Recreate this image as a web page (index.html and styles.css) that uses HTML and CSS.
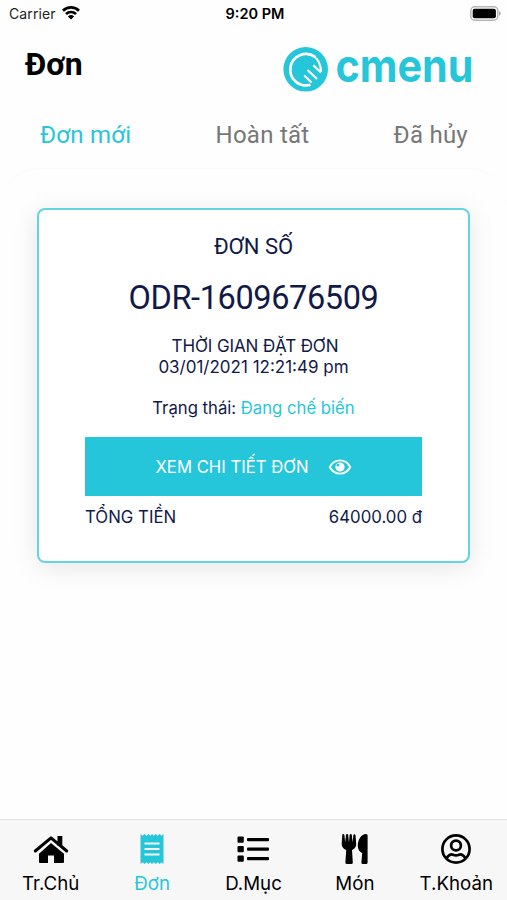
FILE: index.html
```html
<!DOCTYPE html>
<html lang="vi">
<head>
    <meta charset="UTF-8">
    <meta name="viewport" content="width=device-width, initial-scale=1.0">
    <title>Đơn - cmenu</title>
    <link rel="stylesheet" href="styles.css">
</head>
<body>
    <div class="app">
        <div class="status-bar">
            <div class="status-carrier">
                <span>Carrier</span>
                <svg class="wifi-icon" viewBox="0 0 18 14" width="18" height="14" fill="none" stroke="#000" stroke-width="2.7">
                    <path d="M1 4.7a11.5 11.5 0 0 1 16 0"/>
                    <path d="M4 8a7.2 7.2 0 0 1 10 0"/>
                    <path d="M9 13.6L5.9 10.5a4.5 4.5 0 0 1 6.2 0z" fill="#000" stroke="none"/>
                </svg>
            </div>
            <div class="status-time">9:20 PM</div>
            <div class="status-battery">
                <svg viewBox="0 0 31 15" width="31" height="15">
                    <rect x="0.8" y="0.8" width="27" height="13.4" rx="4" fill="#fff" stroke="#b5b5b5" stroke-width="1.5"/>
                    <rect x="2.7" y="2.7" width="23.2" height="9.6" rx="2" fill="#000"/>
                    <path d="M29 5.3q1.7 .6 1.7 2.2t-1.7 2.2z" fill="#aaa"/>
                </svg>
            </div>
        </div>

        <header class="header">
            <h1>Đơn</h1>
            <svg class="logo" viewBox="0 0 196 60" width="196" height="60">
                <circle cx="23.7" cy="23.3" r="22.3"/>
                <path class="logo-ring" d="M33 10.800A15.700 15.700 0 1 0 28.500 38.700"/>
                <path class="logo-lines" d="M32.500 10.800C36.500 14 38.700 18 39 25.500M31.300 19.200L39 26.500M25.500 24L35 33M22.300 29.500L29.500 36.500"/>
                <text x="53.5" y="36" textLength="138" lengthAdjust="spacingAndGlyphs">cmenu</text>
            </svg>
        </header>

        <nav class="tabs">
            <a class="tab active">Đơn mới</a>
            <a class="tab">Hoàn tất</a>
            <a class="tab">Đã hủy</a>
        </nav>

        <main class="content">
            <div class="order-card">
                <h2>ĐƠN SỐ</h2>
                <div class="order-code">ODR-1609676509</div>
                <div class="order-time">
                    <p class="time-label">THỜI GIAN ĐẶT ĐƠN</p>
                    <p>03/01/2021 12:21:49 pm</p>
                </div>
                <p class="order-status">Trạng thái: <span>Đang chế biến</span></p>
                <button class="detail-button">
                    <span>XEM CHI TIẾT ĐƠN</span>
                    <svg viewBox="0 0 24 18" width="24" height="18">
                        <path d="M1.700 9C6.500 .2 17.500 .2 22.300 9C17.500 17.800 6.500 17.800 1.700 9z" fill="none" stroke="#fff" stroke-width="1.900" stroke-linejoin="round"/>
                        <circle cx="12" cy="9" r="4.600" fill="#fff"/>
                        <circle cx="10" cy="7" r="1.500" fill="#26c6da"/>
                    </svg>
                </button>
                <div class="order-total">
                    <span class="total-label">TỔNG TIỀN</span>
                    <span>64000.00 đ</span>
                </div>
            </div>
        </main>

        <nav class="bottom-nav">
            <a class="nav-item">
                <svg viewBox="0 0 36 32" width="36" height="32">
                    <path d="M24.500 3h4.800v10h-4.800z"/>
                    <path d="M18 10L31 20.800V29q0 1-1 1H21V22.500H15V30H7q-1 0-1-1V20.800z"/>
                    <path d="M2.300 18L18 4.800L33.700 18" fill="none" stroke="currentColor" stroke-width="3" stroke-linecap="round" stroke-linejoin="round"/>
                </svg>
                <span>Tr.Chủ</span>
            </a>
            <a class="nav-item active">
                <svg viewBox="0 0 36 32" width="36" height="32">
                    <path d="M6.500 1l2 1.800 2-1.800 2 1.800 2-1.800 1.900 1.800L18 1l1.900 1.800L21.800 1l1.900 1.800L25.600 1l1.900 1.800L29.500 1v30l-2-1.800-1.900 1.800-1.900-1.800-1.900 1.800-1.900-1.800L18 31l-1.900-1.800-1.600 1.800-2-1.800-2 1.800-2-1.800-2 1.800z"/>
                    <path d="M10.500 10.500h15M10.500 16h15M10.500 21.500h15" stroke="#f7f7f7" stroke-width="2"/>
                </svg>
                <span>Đơn</span>
            </a>
            <a class="nav-item">
                <svg viewBox="0 0 36 32" width="36" height="32">
                    <rect x="2.500" y="3.500" width="6.300" height="6.200" rx="1"/>
                    <rect x="2.500" y="13" width="6.300" height="6.200" rx="1"/>
                    <rect x="2.500" y="22.500" width="6.300" height="6.200" rx="1"/>
                    <rect x="12" y="5" width="22" height="3.300" rx="1"/>
                    <rect x="12" y="14.500" width="22" height="3.300" rx="1"/>
                    <rect x="12" y="24" width="22" height="3.300" rx="1"/>
                </svg>
                <span>D.Mục</span>
            </a>
            <a class="nav-item">
                <svg viewBox="0 0 36 32" width="36" height="32">
                    <path d="M5.300 1.500q1.600-1 2.100 .4L8.200 9.500L9 1.500q1.500-1 2.200 .2l.7 7.800L12.700 1.500q1.500-1 2.100 .3L15.600 9.500L16.400 1.700q1.200-1 2.100 .2L19.200 11q0 4-4.200 6l.8 12.500q0 1.500-1.500 1.500H9.900q-1.500 0-1.500-1.500L9.200 17Q4.700 15 4.700 11z"/>
                    <path d="M29 1q1.600 0 1.600 1.600v26.800q0 1.600-1.600 1.600h-3.200q-1.500 0-1.400-1.600l.8-9.200q-4.400-2.400-4.400-7.200C20.800 6 24.500 1 29 1z"/>
                </svg>
                <span>Món</span>
            </a>
            <a class="nav-item">
                <svg viewBox="0 0 36 32" width="36" height="32" fill="none" stroke="currentColor" stroke-width="2.700">
                    <circle cx="18" cy="16" r="13.600"/>
                    <circle cx="18" cy="12.500" r="4.900"/>
                    <path d="M8.300 25.300Q12 20.500 15 21.700T21 21.700Q24 20.500 27.700 25.300"/>
                </svg>
                <span>T.Khoản</span>
            </a>
        </nav>
    </div>
</body>
</html>
```
FILE: styles.css
```css
* {
    margin: 0;
    padding: 0;
    box-sizing: border-box;
}

body {
    font-family: Inter, 'Liberation Sans', sans-serif;
    background: #fefefe;
    color: #000;
    overflow: hidden;
}

.app {
    height: 100vh;
    display: flex;
    flex-direction: column;
}

.status-bar {
    height: 28px;
    padding: 0 6px 2px 9px;
    display: grid;
    grid-template-columns: 1fr auto 1fr;
    align-items: center;
    font-size: 14px;
}

.status-carrier {
    display: flex;
    align-items: center;
    gap: 6px;
    color: #222;
    letter-spacing: 0.1px;
}

.wifi-icon {
    margin-top: -1px;
}

.status-time {
    font-size: 14.5px;
    font-weight: 600;
}

.status-battery {
    display: flex;
    justify-content: flex-end;
}

.header {
    height: 80px;
    padding: 18px 29px 0 25px;
    display: flex;
    justify-content: space-between;
    align-items: flex-start;
}

.header h1 {
    font-family: Roboto, sans-serif;
    font-size: 32px;
    font-weight: 700;
    line-height: 36px;
}

.logo {
    fill: #26c6da;
    overflow: visible;
}

.logo-ring {
    fill: none;
    stroke: #fff;
    stroke-width: 2.7;
}

.logo-lines {
    fill: none;
    stroke: #fff;
    stroke-width: 2.1;
}

.logo text {
    font-family: Inter, sans-serif;
    font-size: 46px;
    font-weight: 700;
}

.tabs {
    height: 60px;
    padding: 10px 39px 0 40px;
    display: flex;
    justify-content: space-between;
    font-family: Roboto, sans-serif;
    font-size: 24px;
    line-height: 34px;
    letter-spacing: 0.25px;
}

.tab {
    color: #777;
}

.tab.active {
    color: #26c6da;
}

.content {
    flex: 1;
    padding: 39px 37px 0;
    border-top: 1px solid #fafafa;
    border-radius: 38px 38px 0 0;
}

.order-card {
    height: 355px;
    padding: 22px 46px 0;
    background: #fff;
    border: 2px solid #65d3e0;
    border-radius: 8px;
    box-shadow: 0 4px 26px rgba(0, 0, 0, 0.1);
    color: #111947;
    text-align: center;
    font-size: 17px;
}

.order-card h2 {
    font-family: Roboto, sans-serif;
    font-size: 22px;
    font-weight: 400;
    line-height: 30px;
}

.order-code {
    margin-top: 16px;
    font-family: Roboto, sans-serif;
    font-size: 32.5px;
    line-height: 40px;
    letter-spacing: -0.4px;
}

.order-time {
    margin-top: 18px;
    line-height: 21px;
}

.time-label {
    padding-left: 3px;
    letter-spacing: -0.12px;
}

.order-status {
    margin-top: 19px;
    font-size: 16.7px;
    line-height: 22px;
}

.order-status span {
    color: #26c6da;
}

.detail-button {
    width: 100%;
    height: 59px;
    margin-top: 18px;
    display: flex;
    justify-content: center;
    align-items: center;
    gap: 19px;
    border: none;
    background: #26c6da;
    color: #fff;
    font-family: inherit;
    font-size: 16.7px;
    cursor: pointer;
}

.order-total {
    margin-top: 10px;
    display: flex;
    justify-content: space-between;
    font-size: 16.8px;
    line-height: 22px;
}

.bottom-nav {
    height: 81px;
    padding-top: 13px;
    display: grid;
    grid-template-columns: repeat(5, 1fr);
    background: #f7f7f7;
    border-top: 1px solid #e2e2e2;
}

.nav-item {
    display: flex;
    flex-direction: column;
    align-items: center;
    color: #000;
    font-size: 18.7px;
    line-height: 38px;
}

.nav-item svg:not([fill]) {
    fill: currentColor;
}

.nav-item.active {
    color: #26c6da;
}
```
